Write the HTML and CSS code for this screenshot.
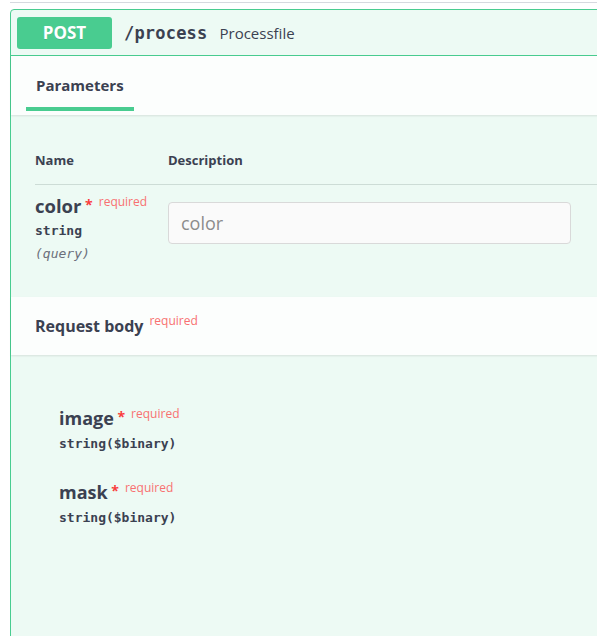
FILE: index.html
```html
<!DOCTYPE html>
<html lang="en">
<head>
<meta charset="utf-8">
<title>POST /process</title>
<link rel="stylesheet" href="styles.css">
</head>
<body>
<div class="prev-rule"></div>
<div class="opblock">
  <div class="summary">
    <span class="method">POST</span>
    <span class="path">/process</span>
    <span class="summary-desc">Processfile</span>
  </div>

  <div class="section-header">
    <div class="tab">Parameters</div>
  </div>

  <div class="params">
    <div class="params-head">
      <div class="col-name">Name</div>
      <div class="col-desc">Description</div>
    </div>
    <div class="param-row">
      <div class="col-name">
        <div class="param-name">color<span class="star">&nbsp;*</span><span class="req">required</span></div>
        <div class="param-type">string</div>
        <div class="param-in">(query)</div>
      </div>
      <div class="col-desc">
        <input class="field" type="text" placeholder="color">
      </div>
    </div>
  </div>

  <div class="section-header body-header">
    <h4 class="body-title">Request body<span class="req req-title">required</span></h4>
  </div>

  <div class="body">
    <div class="prop">
      <div class="prop-name">image<span class="star">&nbsp;*</span><span class="req">required</span></div>
      <div class="prop-type">string($binary)</div>
    </div>
    <div class="prop">
      <div class="prop-name">mask<span class="star">&nbsp;*</span><span class="req">required</span></div>
      <div class="prop-type">string($binary)</div>
    </div>
  </div>
</div>
</body>
</html>
```

FILE: styles.css
```css
html, body {
  margin: 0;
  padding: 0;
}

body {
  width: 597px;
  height: 636px;
  overflow: hidden;
  background: #ffffff;
  font-family: "Open Sans", "Liberation Sans", sans-serif;
  color: #3b4151;
}

/* bottom rule of the block above */
.prev-rule {
  margin: 2px 0 0 10px;
  border-top: 1px solid #d6d9df;
}

/* operation block */
.opblock {
  margin: 6px 0 0 10px;
  width: 640px;
  height: 700px;
  border: 1px solid #49cc90;
  border-radius: 4px;
  background: #edfaf4;
}

.summary {
  display: flex;
  align-items: center;
  height: 45px;
  padding: 0 6px;
  border-bottom: 1px solid #49cc90;
}

.method {
  display: flex;
  align-items: center;
  justify-content: center;
  flex: none;
  width: 95px;
  height: 32px;
  border-radius: 3px;
  background: #49cc90;
  color: #ffffff;
  font-size: 17px;
  font-weight: 700;
  text-shadow: 0 1px 0 rgba(0, 0, 0, 0.1);
}

.path {
  margin-left: 12px;
  font-family: "DejaVu Sans Mono", monospace;
  font-size: 17px;
  font-weight: 700;
  letter-spacing: 0.2px;
  color: #3b4151;
}

.summary-desc {
  margin-left: 12px;
  font-size: 15px;
  color: #3b4151;
}

/* section headers (tabs / request body) */
.section-header {
  position: relative;
  z-index: 1;
  height: 59px;
  padding: 0 15px;
  background: rgba(255, 255, 255, 0.8);
  box-shadow: 0 1px 2px rgba(0, 0, 0, 0.1);
}

.tab {
  display: inline-block;
  padding: 19px 10px 12px;
  border-bottom: 4px solid #49cc90;
  font-size: 15px;
  font-weight: 700;
  line-height: 20px;
}

/* parameters table */
.params {
  padding: 33px 0 32px 24px;
}

.params-head {
  display: flex;
  padding-bottom: 12px;
  border-bottom: 1px solid #cddcd6;
  font-size: 13px;
  font-weight: 700;
  line-height: 24px;
}

.col-name {
  flex: none;
  width: 133px;
}

.param-row {
  display: flex;
  padding-top: 10px;
}

.param-name {
  font-size: 18.5px;
  font-weight: 700;
  line-height: 22px;
}

/* superscript markers stay out of the line box height */
.star {
  line-height: 0;
  color: #f93e3e;
  font-size: 14px;
  font-weight: 700;
  vertical-align: 3px;
}

.req {
  margin-left: 6px;
  line-height: 0;
  color: #f87171;
  font-size: 12px;
  font-weight: 400;
  vertical-align: 7px;
}

.param-type {
  margin-top: 2px;
  font-family: "DejaVu Sans Mono", monospace;
  font-size: 13px;
  font-weight: 700;
  line-height: 23px;
}

.param-in {
  font-family: "DejaVu Sans Mono", monospace;
  font-size: 13px;
  font-style: italic;
  line-height: 23px;
  color: #6b6f7b;
}

.field {
  display: block;
  box-sizing: border-box;
  width: 403px;
  height: 42px;
  margin: 7px 0 0;
  padding: 0 12px;
  border: 1px solid #d9d9d9;
  border-radius: 4px;
  background: #fafafa;
  font-family: "Open Sans", "Liberation Sans", sans-serif;
  font-size: 18px;
  color: #3b4151;
  outline: none;
}

.field::placeholder {
  color: #8c8c8c;
}

/* request body */
.body-header {
  height: 58px;
  padding: 0 24px;
}

.body-title {
  margin: 0;
  padding-top: 19px;
  font-size: 16px;
  font-weight: 700;
  line-height: 20px;
}

.body {
  padding: 51px 0 0 48px;
}

.prop + .prop {
  margin-top: 25px;
}

.prop-name {
  font-size: 18px;
  font-weight: 700;
  line-height: 24px;
}

.prop-type {
  margin-top: 2px;
  font-family: "DejaVu Sans Mono", monospace;
  font-size: 13px;
  font-weight: 700;
  line-height: 23px;
}
```
